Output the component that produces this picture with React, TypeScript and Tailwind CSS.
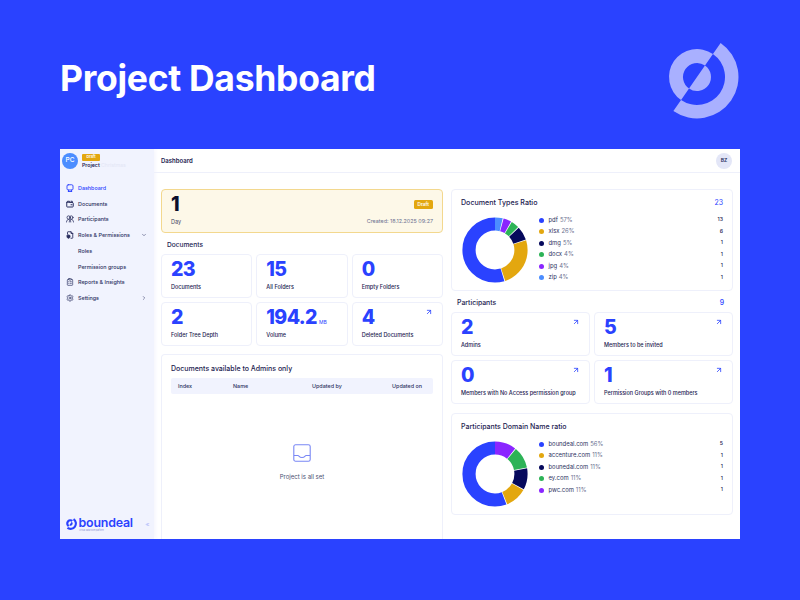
import React from "react";
import { ChevronDown, ChevronRight, ChevronsLeft, ClipboardList, Settings, ArrowUpRight } from "lucide-react";

const font = "font-['Inter',sans-serif]";

function Logo({ size, color }: { size: number; color: string }) {
  return (
    <svg width={size} height={size} viewBox="-42 -42 84 84" className="shrink-0">
      <g transform="rotate(34.7)" fill={color}>
        <path d="M0 -41.5 A41.5 41.5 0 0 1 0 41.5 L0 28 A28 28 0 0 0 0 -28 Z" />
        <path d="M0 -28 A28 28 0 0 0 0 28 L0 14 A14 14 0 0 1 0 -14 Z" />
        <path d="M0 -14 A14 14 0 0 1 0 14 Z" />
      </g>
    </svg>
  );
}

function Arrow() {
  return <ArrowUpRight className="absolute top-[5px] right-[9px] w-[8px] h-[8px] text-[#2a42ff]" strokeWidth={2.4} />;
}

function Stat({ value, unit, label, arrow }: { value: string; unit?: string; label: string; arrow?: boolean }) {
  return (
    <div className="relative bg-white border border-[#eef0fb] rounded-[4px] h-[44px] pl-[9px] pt-[3px]">
      {arrow && <Arrow />}
      <div className="flex items-baseline h-[22px]">
        <span className="text-[19.5px] leading-[22px] font-extrabold tracking-[-0.6px] text-[#2a42ff]">{value}</span>
        {unit && <span className="ml-[2px] text-[5px] text-[#2a42ff]">{unit}</span>}
      </div>
      <div className="mt-[3px] text-[5.5px] leading-[8px] font-medium text-[#1c2250] whitespace-nowrap">{label}</div>
    </div>
  );
}

function Item({ icon, label, active, right }: { icon?: React.ReactNode; label: string; active?: boolean; right?: React.ReactNode }) {
  return (
    <div className="flex items-center h-[15.75px] pl-[6px] pr-[7px]">
      <div className="w-[11px] flex items-center">{icon}</div>
      <span className={"text-[5.4px] font-medium whitespace-nowrap ml-[1px] " + (active ? "text-[#2a42ff]" : "text-[#2b3060]")}>{label}</span>
      {right && <div className="ml-auto">{right}</div>}
    </div>
  );
}

function Donut({ segs }: { segs: { pct: number; color: string }[] }) {
  const r = 26;
  const c = 2 * Math.PI * r;
  let acc = 0;
  return (
    <svg width={66} height={66} viewBox="0 0 66 66" className="shrink-0">
      <g transform="rotate(-90 33 33)">
        {segs.map((s, i) => {
          const len = (s.pct / 100) * c;
          const el = (
            <circle key={i} cx="33" cy="33" r={r} fill="none" stroke={s.color} strokeWidth="13.2" strokeDasharray={`${Math.max(len - 0.7, 0)} ${c}`} strokeDashoffset={-acc} />
          );
          acc += len;
          return el;
        })}
      </g>
    </svg>
  );
}

function Legend({ rows }: { rows: { name: string; pct: string; n: string; color: string }[] }) {
  return (
    <div className="flex-1 flex flex-col -mt-[2.5px]">
      {rows.map((r) => (
        <div key={r.name} className="flex items-center h-[11.47px] text-[5.9px]">
          <span className="w-[5px] h-[5px] rounded-full mr-[4.5px]" style={{ background: r.color }} />
          <span className="text-[#2b3060]">{r.name}</span>
          <span className="ml-[2px] text-[#6b7090]">{r.pct}</span>
          <span className="ml-auto text-[#1c2250] font-medium text-[5.2px]">{r.n}</span>
        </div>
      ))}
    </div>
  );
}

const BLUE = "#2a42ff", GOLD = "#e3a70f", NAVY = "#06095c", GREEN = "#2db357", PURPLE = "#8a26ff", SKY = "#4c8dff";

const ic = "w-[8px] h-[8px]";

function IconDash() {
  return (
    <svg viewBox="0 0 16 16" className={ic} fill="none" stroke="#2a42ff" strokeWidth="1.8" strokeLinecap="round" strokeLinejoin="round">
      <rect x="2" y="1.5" width="12" height="10.5" rx="2.5" />
      <path d="M4.5 15h7M5 12v3M11 12v3" />
    </svg>
  );
}
function IconDocs() {
  return (
    <svg viewBox="0 0 16 16" className={ic} fill="none" stroke="#2b3060" strokeWidth="2" strokeLinecap="round" strokeLinejoin="round">
      <path d="M1.5 5V13a1 1 0 0 0 1 1H13a1.5 1.5 0 0 0 1.5-1.5V6.5A1.5 1.5 0 0 0 13 5Z" />
      <path d="M2 5 3 2.5h4L8 5M10 2.5h2.5L13 5" />
      <path d="M10 9.5h2" />
    </svg>
  );
}
function IconUsers() {
  return (
    <svg viewBox="0 0 16 16" className={ic} fill="none" stroke="#2b3060" strokeWidth="1.6" strokeLinecap="round" strokeLinejoin="round">
      <circle cx="5.3" cy="5" r="3.3" />
      <circle cx="10.7" cy="5" r="3.3" />
      <path d="M1 14c0-3 1.8-5 4.3-5s4.2 2 4.2 5M6.5 14c0-3 1.8-5 4.2-5S15 11 15 14" />
    </svg>
  );
}
function IconRoles() {
  return (
    <svg viewBox="0 0 16 16" className={ic} fill="none" stroke="#2b3060" strokeWidth="1.8" strokeLinecap="round" strokeLinejoin="round">
      <path d="M3 6V2.5A1 1 0 0 1 4 1.5h6L13.5 5v8.5a1 1 0 0 1-1 1H10" />
      <path d="M10 1.5V5h3.5" />
      <path d="M5 8l3 1v2.5c0 1.5-1.3 2.5-3 3.2-1.7-.7-3-1.7-3-3.2V9Z" fill="#2b3060" />
    </svg>
  );
}
function IconTray() {
  return (
    <svg width="18" height="18" viewBox="0 0 18 18" fill="none" stroke="#7a88f5" strokeWidth="1.1" strokeLinejoin="round">
      <rect x="0.8" y="0.8" width="16.4" height="16.4" rx="1.8" />
      <path d="M1 11.5H5C6 11.5 6 13.5 9 13.5S12 11.5 13 11.5H17" />
    </svg>
  );
}

export default function App() {
  return (
    <div className={"w-[800px] h-[600px] bg-[#2a42ff] relative overflow-hidden flex flex-col " + font}>
      <div className="h-[149px] shrink-0 flex items-start justify-between pl-[60px] pr-[61px]">
        <h1 className="mt-[61px] text-[35.5px] font-bold text-white leading-[36px] tracking-[-0.3px]">Project Dashboard</h1>
        <div className="mt-[35px]"><Logo size={84} color="#a9b0ff" /></div>
      </div>

      <div className="ml-[60px] w-[680px] h-[390px] bg-white flex overflow-hidden">
        <aside className="w-[94px] shrink-0 bg-[#f1f3fe] flex flex-col shadow-[2px_0_3px_rgba(40,60,200,0.04)]">
          <div className="h-[24px] flex items-center pl-[2px]">
            <div className="w-[16px] h-[16px] rounded-full bg-[#4c8dff] text-white text-[6.5px] font-medium flex items-center justify-center">PC</div>
            <div className="ml-[4px] flex flex-col">
              <span className="w-[18px] h-[7px] rounded-[1px] bg-[#e3a70f] text-white text-[3.8px] font-semibold flex items-center justify-center">Draft</span>
              <span className="mt-[1px] text-[5.2px] font-semibold text-[#1c2250] whitespace-nowrap leading-[7px]">Project <span className="text-[#e3e6f5] font-normal">Christmas</span></span>
            </div>
          </div>
          <nav className="mt-[7px] flex flex-col">
            <Item active label="Dashboard" icon={<IconDash />} />
            <Item label="Documents" icon={<IconDocs />} />
            <Item label="Participants" icon={<IconUsers />} />
            <Item label="Roles & Permissions" icon={<IconRoles />} right={<ChevronDown className="w-[6px] h-[6px] text-[#2b3060]" strokeWidth={2} />} />
            <Item label="Roles" />
            <Item label="Permission groups" />
            <Item label="Reports & Insights" icon={<ClipboardList className={ic + " text-[#2b3060]"} strokeWidth={2} />} />
            <Item label="Settings" icon={<Settings className={ic + " text-[#2b3060]"} strokeWidth={2} />} right={<ChevronRight className="w-[6px] h-[6px] text-[#2b3060]" strokeWidth={2} />} />
          </nav>
          <div className="mt-auto h-[27px] flex items-start pt-[5px] pl-[4px] pr-[4px]">
            <Logo size={13} color="#2a42ff" />
            <div className="ml-[1.5px] flex flex-col">
              <span className="text-[12.4px] font-semibold text-[#2a42ff] leading-[12px] tracking-[-0.2px]">boundeal</span>
              <span className="text-[2px] text-[#8a92d0] leading-[3px] pl-[0.5px] whitespace-nowrap">Virtual data room platform</span>
            </div>
            <ChevronsLeft className="ml-auto mt-[5px] w-[5px] h-[5px] text-[#7a88f5]" strokeWidth={2.5} />
          </div>
        </aside>

        <main className="flex-1 min-w-0 flex flex-col">
          <header className="h-[24px] shrink-0 border-b border-[#eef0fb] flex items-center justify-between pl-[7px] pr-[8px]">
            <span className="text-[6px] font-semibold text-[#1c2250]">Dashboard</span>
            <span className="w-[16px] h-[16px] rounded-full bg-[#e3e6f7] text-[#2b3060] text-[5px] font-semibold flex items-center justify-center">BZ</span>
          </header>
          <div className="flex-1 min-h-0 flex gap-[8px] pl-[7px] pr-[7px] pt-[16px]">
            <div className="w-[282px] shrink-0 flex flex-col">
              <div className="relative h-[44px] bg-[#fdf8e8] border border-[#f3d88e] rounded-[4px] pl-[9px] pt-[3px]">
                <div className="text-[19.5px] leading-[22px] font-extrabold text-[#0b0f2c]">1</div>
                <div className="mt-[3px] text-[5.5px] leading-[8px] text-[#3a3f60]">Day</div>
                <span className="absolute top-[10px] right-[9px] w-[19.5px] h-[9px] rounded-[1.5px] bg-[#e3a70f] text-white text-[4.8px] font-semibold flex items-center justify-center">Draft</span>
                <span className="absolute top-[27px] right-[9px] text-[5.4px] leading-[8px] text-[#6b7090]">Created: 18.12.2025 09:27</span>
              </div>
              <div className="mt-[6px] h-[12px] pl-[6px] text-[6.6px] leading-[12px] font-medium text-[#1c2250]">Documents</div>
              <div className="mt-[3px] grid grid-cols-3 gap-[4px]">
                <Stat value="23" label="Documents" />
                <Stat value="15" label="All Folders" />
                <Stat value="0" label="Empty Folders" />
                <Stat value="2" label="Folder Tree Depth" />
                <Stat value="194.2" unit="MB" label="Volume" />
                <Stat value="4" label="Deleted Documents" arrow />
              </div>
              <div className="mt-[8px] flex-1 bg-white border border-[#eef0fb] rounded-t-[4px] border-b-0 px-[9px] pt-[9px] flex flex-col">
                <div className="text-[7px] leading-[9px] font-medium text-[#1c2250] whitespace-nowrap">Documents available to Admins only</div>
                <div className="mt-[5px] h-[16px] rounded-[2px] bg-[#f1f3fe] grid grid-cols-[55px_79px_80px_1fr] items-center pl-[7px] pr-[11px] text-[5.4px] font-medium text-[#2b3060]">
                  <span>Index</span>
                  <span>Name</span>
                  <span>Updated by</span>
                  <span className="text-right">Updated on</span>
                </div>
                <div className="flex flex-col items-center mt-[50px]">
                  <IconTray />
                  <div className="mt-[11px] text-[6px] leading-[8px] text-[#4a4f70]">Project is all set</div>
                </div>
              </div>
            </div>

            <div className="flex-1 min-w-0 flex flex-col">
              <div className="h-[102px] bg-white border border-[#eef0fb] rounded-[4px] px-[9px] pt-[8px]">
                <div className="flex justify-between items-center h-[10px]">
                  <span className="text-[7.1px] font-medium text-[#1c2250]">Document Types Ratio</span>
                  <span className="text-[7px] text-[#2a42ff]">23</span>
                </div>
                <div className="mt-[9px] flex items-start gap-[11px] ml-[1px]">
                  <Donut segs={[{ pct: 4.3, color: SKY }, { pct: 4.3, color: PURPLE }, { pct: 4.3, color: GREEN }, { pct: 7.1, color: NAVY }, { pct: 25, color: GOLD }, { pct: 55, color: BLUE }]} />
                  <Legend rows={[
                    { name: "pdf", pct: "57%", n: "13", color: BLUE },
                    { name: "xlsx", pct: "26%", n: "6", color: GOLD },
                    { name: "dmg", pct: "5%", n: "1", color: NAVY },
                    { name: "docx", pct: "4%", n: "1", color: GREEN },
                    { name: "jpg", pct: "4%", n: "1", color: PURPLE },
                    { name: "zip", pct: "4%", n: "1", color: SKY },
                  ]} />
                </div>
              </div>
              <div className="mt-[3px] h-[18px] flex items-center justify-between pl-[6px] pr-[9px] text-[6.9px] font-medium text-[#1c2250]">
                <span>Participants</span>
                <span className="text-[#2a42ff]">9</span>
              </div>
              <div className="grid grid-cols-2 gap-[4px]">
                <Stat value="2" label="Admins" arrow />
                <Stat value="5" label="Members to be invited" arrow />
                <Stat value="0" label="Members with No Access permission group" arrow />
                <Stat value="1" label="Permission Groups with 0 members" arrow />
              </div>
              <div className="mt-[9px] h-[102px] bg-white border border-[#eef0fb] rounded-[4px] px-[9px] pt-[8px]">
                <div className="h-[10px] flex items-center text-[7px] font-medium text-[#1c2250]">Participants Domain Name ratio</div>
                <div className="mt-[9px] flex items-start gap-[11px] ml-[1px]">
                  <Donut segs={[{ pct: 11, color: PURPLE }, { pct: 11, color: GREEN }, { pct: 11, color: NAVY }, { pct: 11, color: GOLD }, { pct: 56, color: BLUE }]} />
                  <Legend rows={[
                    { name: "boundeal.com", pct: "56%", n: "5", color: BLUE },
                    { name: "accenture.com", pct: "11%", n: "1", color: GOLD },
                    { name: "bounedal.com", pct: "11%", n: "1", color: NAVY },
                    { name: "ey.com", pct: "11%", n: "1", color: GREEN },
                    { name: "pwc.com", pct: "11%", n: "1", color: PURPLE },
                  ]} />
                </div>
              </div>
            </div>
          </div>
        </main>
      </div>
    </div>
  );
}
